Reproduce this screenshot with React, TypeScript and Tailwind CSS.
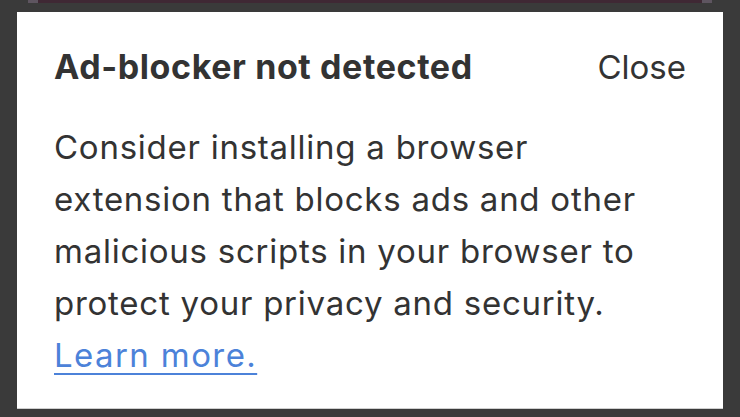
export default function App() {
  return (
    <div className="w-[740px] h-[417px] bg-[#3a3a3a] overflow-hidden" style={{ fontFamily: "Inter, 'Noto Sans', sans-serif" }}>
      {/* page peeking behind the overlay */}
      <div className="flex h-[3px] mx-[28px]">
        <div className="w-[10px] bg-[#5e5560]" />
        <div className="flex-1 bg-[#3f2834]" />
        <div className="w-[10px] bg-[#5e5560]" />
      </div>

      <div className="mt-[9px] mx-[17px] h-[397px] bg-white border-b border-[#cfcfcf] px-[37px] pt-[35px] text-[#333333]">
        <div className="flex items-baseline justify-between">
          <h2 className="text-[34px] font-bold leading-[40px] tracking-[0.6px]">Ad-blocker not detected</h2>
          <button className="text-[33px] leading-[40px]">Close</button>
        </div>

        <p className="mt-[34px] text-[33px] leading-[52px] tracking-[0.75px]">
          <span className="block">Consider installing a browser</span>
          <span className="block">extension that blocks ads and other</span>
          <span className="block">malicious scripts in your browser to</span>
          <span className="block">protect your privacy and security.</span>
          <a href="#" className="text-[#4c82d9] tracking-[1.4px] underline underline-offset-[6px] decoration-[2px]">
            Learn more.
          </a>
        </p>
      </div>
    </div>
  );
}
